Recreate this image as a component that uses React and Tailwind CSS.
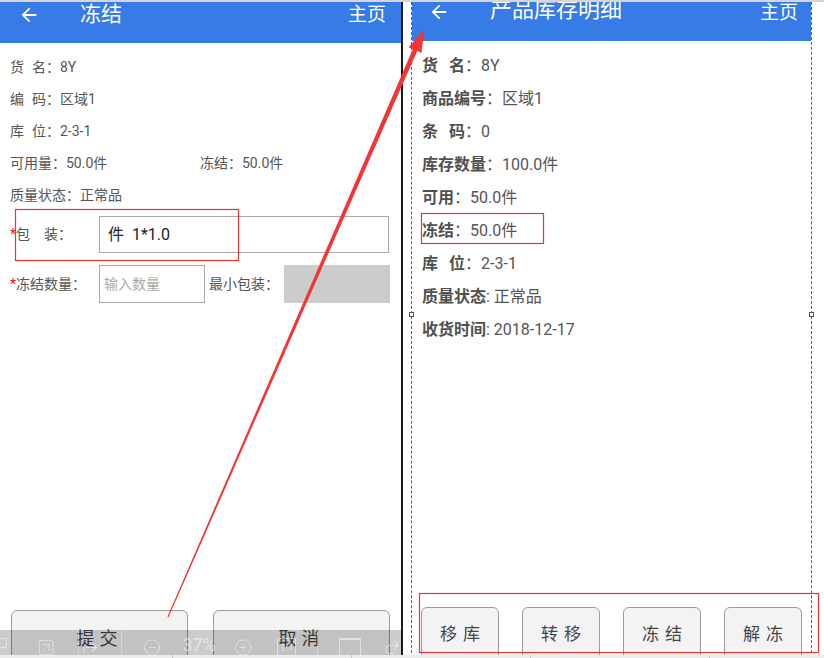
import React from 'react';
import { CircleMinus, CirclePlus, SquareArrowUpRight, Forward, Redo2 } from 'lucide-react';

const font = { fontFamily: 'Roboto, "Noto Sans CJK SC", sans-serif' };

function BackArrow({ className }) {
  return (
    <svg viewBox="0 0 24 24" className={className} fill="currentColor">
      <path d="M20 11H7.83l5.59-5.59L12 4l-8 8 8 8 1.41-1.41L7.83 13H20v-2z" />
    </svg>
  );
}

const leftRows = [
  [<><span className="mr-[8px]">货</span>名</>, '8Y'],
  [<><span className="mr-[8px]">编</span>码</>, '区域1'],
  [<><span className="mr-[8px]">库</span>位</>, '2-3-1'],
];

const rightRows = [
  [<><span className="mr-[11px]">货</span>名</>, '：', '8Y'],
  ['商品编号', '：', '区域1'],
  [<><span className="mr-[11px]">条</span>码</>, '：', '0'],
  ['库存数量', '：', '100.0件'],
  ['可用', '：', '50.0件'],
  ['冻结', '：', '50.0件'],
  [<><span className="mr-[11px]">库</span>位</>, '：', '2-3-1'],
  ['质量状态', ': ', '正常品'],
  ['收货时间', ': ', '2018-12-17'],
];

function OldButton({ children, className }) {
  return (
    <div className={`flex h-[52px] items-start justify-center rounded-t-[6px] border border-[#9c9c9c] bg-[#f3f3f3] text-[#444] ${className}`}>
      {children}
    </div>
  );
}

function FreezeScreen() {
  return (
    <div className="flex w-[401px] flex-col">
      <div className="flex h-[41px] items-start bg-[#377be6] text-white">
        <BackArrow className="ml-[18px] mt-[2px] h-[22px] w-[22px]" />
        <span className="ml-[40px] pt-[2px] text-[21px] leading-none">冻结</span>
        <span className="ml-auto mr-[15px] pt-[3px] text-[19px] leading-none">主页</span>
      </div>
      <div className="px-[10px] pt-[8px] text-[14px] text-[#555]">
        {leftRows.map(([label, value], i) => (
          <div key={i} className="flex h-8 items-center">
            <span>{label}</span>
            <span>：{value}</span>
          </div>
        ))}
        <div className="flex h-8 items-center">
          <span className="w-[190px]">可用量：50.0件</span>
          <span>冻结：50.0件</span>
        </div>
        <div className="flex h-8 items-center">质量状态：正常品</div>
        <div className="mt-[5px] flex h-[37px] items-center">
          <span className="w-[89px]">
            <span className="text-[#ee1111]">*</span>
            <span className="mr-[14px]">包</span>装：
          </span>
          <div className="flex h-[37px] w-[290px] items-center border border-[#a8a8a8] pl-[8px] text-[16px] text-[#222]">
            件&nbsp;&nbsp;1*1.0
          </div>
        </div>
        <div className="mt-[12px] flex h-[38px] items-center">
          <span className="w-[89px]">
            <span className="text-[#ee1111]">*</span>冻结数量：
          </span>
          <div className="flex h-[38px] w-[106px] items-center border border-[#a8a8a8] pl-[4px] text-[14px] text-[#aaa]">
            输入数量
          </div>
          <span className="ml-[4px] w-[75px]">最小包装：</span>
          <div className="h-[38px] w-[106px] bg-[#cccccc]" />
        </div>
      </div>
      <div className="mt-auto flex h-[48px] justify-between px-[11px] text-[18px]">
        <OldButton className="w-[177px] pt-[14px]">
          <span className="tracking-[5px]">提交</span>
        </OldButton>
        <OldButton className="w-[177px] pt-[14px]">
          <span className="tracking-[5px]">取消</span>
        </OldButton>
      </div>
    </div>
  );
}

function StockScreen() {
  return (
    <div className="flex w-[401px] flex-col overflow-hidden border-x border-dashed border-[#1d6bd0]">
      <div className="flex h-[39px] items-start overflow-hidden bg-[#377be6] text-white">
        <BackArrow className="ml-[16px] mt-[-1px] h-[22px] w-[22px]" />
        <span className="ml-[40px] mt-[-3px] text-[22px] leading-none">产品库存明细</span>
        <span className="ml-auto mr-[13px] mt-[1px] text-[19px] leading-none">主页</span>
      </div>
      <div className="pl-[10px] pt-[8px] text-[16px]">
        {rightRows.map(([label, colon, value], i) => (
          <div key={i} className="flex h-[33px] items-center">
            <span className="font-bold text-[#505050]">{label}</span>
            <span className="whitespace-pre text-[#555]">{colon}{value}</span>
          </div>
        ))}
      </div>
      <div className="mt-auto flex h-[51px] justify-between px-[9px] text-[17px]">
        {['移库', '转移', '冻结', '解冻'].map((t) => (
          <OldButton key={t} className="w-[78px] pt-[14px]">
            <span className="tracking-[6px] pl-[6px]">{t}</span>
          </OldButton>
        ))}
      </div>
    </div>
  );
}

function ViewerToolbar() {
  return (
    <div className="absolute left-0 top-[628px] flex h-[25px] w-[401px] items-start bg-black/20 pt-[8px] text-white/50">
      <div className="ml-[-8px] h-[10px] w-[16px] rounded-[2px] border border-white/50" />
      <SquareArrowUpRight className="ml-[30px] h-[19px] w-[19px]" strokeWidth={1.2} />
      <div className="ml-[22px] mt-[-8px] h-[25px] border-l border-white/30" />
      <Forward className="ml-[2px] h-[19px] w-[19px]" strokeWidth={1.5} />
      <div className="ml-[22px] mt-[-8px] h-[25px] border-l border-white/30" />
      <CircleMinus className="ml-[21px] h-[19px] w-[19px]" strokeWidth={1.2} />
      <span className="ml-[21px] mt-[-2px] text-[18px] leading-none">37%</span>
      <CirclePlus className="ml-[18px] h-[19px] w-[19px]" strokeWidth={1.2} />
      <div className="ml-[25px] flex h-[19px] w-[20px] items-center justify-center border border-white/50 text-[10px] leading-none">1:1</div>
      <div className="ml-[21px] mt-[-8px] h-[25px] border-l border-white/30" />
      <div className="ml-[21px] h-[19px] w-[22px] border-x border-t-2 border-white/50" />
      <Redo2 className="ml-[22px] h-[19px] w-[19px]" strokeWidth={1.5} />
    </div>
  );
}

export default function App() {
  return (
    <div className="relative flex h-[658px] w-[824px] overflow-hidden border-t-2 border-[#d6d6d6] bg-white" style={font}>
      <FreezeScreen />
      <div className="w-[2px] bg-[#1a1a1a]" />
      <div className="w-[8px]" />
      <StockScreen />
      <div className="flex-1" />

      <ViewerToolbar />
      <div className="absolute bottom-0 left-0 flex h-[3px] w-full bg-[#ededed]">
        <div className="ml-[172px] h-full border-l border-[#c8c8c8]" />
        <div className="ml-[178px] h-full border-l border-[#c8c8c8]" />
        <div className="ml-[178px] h-full border-l border-[#c8c8c8]" />
        <div className="ml-[178px] h-full border-l border-[#c8c8c8]" />
      </div>

      <div className="absolute left-[409px] top-[310px] h-[5px] w-[5px] border border-[#555] bg-white" />
      <div className="absolute left-[809px] top-[310px] h-[5px] w-[5px] border border-[#555] bg-white" />

      {/* annotation layer: red boxes and arrow */}
      <svg className="pointer-events-none absolute left-0 top-[-2px] h-[658px] w-[824px]" viewBox="0 0 824 658">
        <g fill="none" stroke="#ee3333" strokeWidth="1.2">
          <rect x="15.5" y="209.5" width="223" height="51" />
          <rect x="421.5" y="213.5" width="122" height="30" />
          <rect x="419.5" y="593.5" width="399" height="59" />
        </g>
        <polygon
          fill="#f23535"
          points="168.55,617.24 417.2,51.0 421.5,52.9 424,30 408.6,47.3 412.8,49.2 167.45,616.76"
        />
      </svg>
    </div>
  );
}
